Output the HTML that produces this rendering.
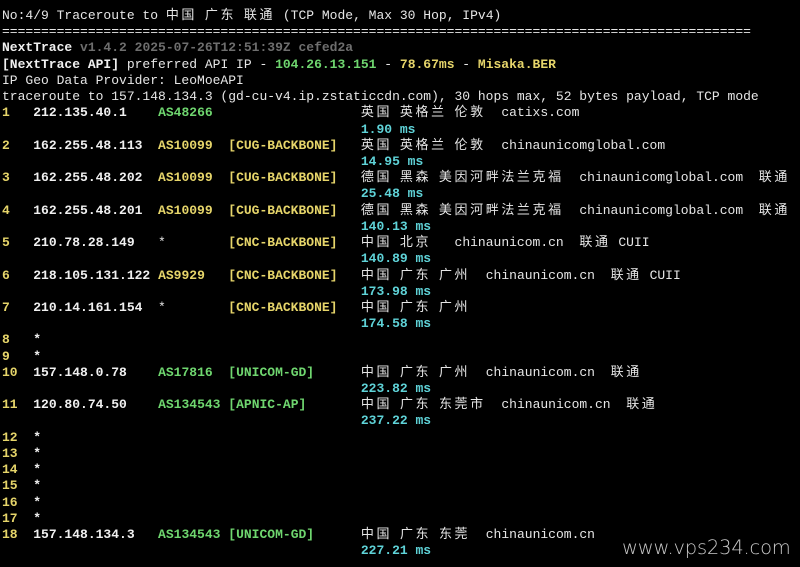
<!DOCTYPE html>
<html><head><meta charset="utf-8"><style>
html,body{margin:0;padding:0;background:#000;width:800px;height:567px;overflow:hidden}
.t{position:absolute;left:2px;top:8px;font-family:"Liberation Mono","Noto Sans CJK SC",monospace;font-size:13px;color:#e6e6e6}
.t div{height:16.22px;line-height:16px;overflow:visible;white-space:pre}
.c{font-family:"Noto Sans CJK SC","WenQuanYi Zen Hei",sans-serif;letter-spacing:2.6px;font-size:13px;line-height:8px}
.g{color:#6fd66f;font-weight:bold}
.y{color:#e6d56a;font-weight:bold}
.gr{color:#6e6e6e;font-weight:bold}
.m{color:#5fd3d8;font-weight:bold}
.w{color:#f0f0f0;font-weight:bold}
.wm{position:absolute;left:622px;top:536px;font-family:"DejaVu Sans","Liberation Sans",sans-serif;font-weight:200;font-size:19.5px;color:#c8c8c8;letter-spacing:-0.2px}
</style></head><body>
<div class="t"><div>No:4/9 Traceroute to <span class="c">中国</span> <span class="c">广东</span> <span class="c">联通</span> (TCP Mode, Max 30 Hop, IPv4)</div><div>================================================================================================</div><div><span class="w">NextTrace</span> <span class="gr">v1.4.2 2025-07-26T12:51:39Z cefed2a</span></div><div><span class="w">[NextTrace API]</span> preferred API IP - <span class="g">104.26.13.151</span> - <span class="y">78.67ms</span> - <span class="y">Misaka.BER</span></div><div>IP Geo Data Provider: LeoMoeAPI</div><div>traceroute to 157.148.134.3 (gd-cu-v4.ip.zstaticcdn.com), 30 hops max, 52 bytes payload, TCP mode</div><div><span class="y">1</span>   <span class="w">212.135.40.1</span>    <span class="g">AS48266</span>                   <span class="c">英国</span> <span class="c">英格兰</span> <span class="c">伦敦</span>  catixs.com</div><div>                                              <span class="m">1.90 ms</span></div><div><span class="y">2</span>   <span class="w">162.255.48.113</span>  <span class="y">AS10099</span>  <span class="y">[CUG-BACKBONE]</span>   <span class="c">英国</span> <span class="c">英格兰</span> <span class="c">伦敦</span>  chinaunicomglobal.com</div><div>                                              <span class="m">14.95 ms</span></div><div><span class="y">3</span>   <span class="w">162.255.48.202</span>  <span class="y">AS10099</span>  <span class="y">[CUG-BACKBONE]</span>   <span class="c">德国</span> <span class="c">黑森</span> <span class="c">美因河畔法兰克福</span>  chinaunicomglobal.com  <span class="c">联通</span></div><div>                                              <span class="m">25.48 ms</span></div><div><span class="y">4</span>   <span class="w">162.255.48.201</span>  <span class="y">AS10099</span>  <span class="y">[CUG-BACKBONE]</span>   <span class="c">德国</span> <span class="c">黑森</span> <span class="c">美因河畔法兰克福</span>  chinaunicomglobal.com  <span class="c">联通</span></div><div>                                              <span class="m">140.13 ms</span></div><div><span class="y">5</span>   <span class="w">210.78.28.149</span>   *        <span class="y">[CNC-BACKBONE]</span>   <span class="c">中国</span> <span class="c">北京</span>   chinaunicom.cn  <span class="c">联通</span> CUII</div><div>                                              <span class="m">140.89 ms</span></div><div><span class="y">6</span>   <span class="w">218.105.131.122</span> <span class="y">AS9929</span>   <span class="y">[CNC-BACKBONE]</span>   <span class="c">中国</span> <span class="c">广东</span> <span class="c">广州</span>  chinaunicom.cn  <span class="c">联通</span> CUII</div><div>                                              <span class="m">173.98 ms</span></div><div><span class="y">7</span>   <span class="w">210.14.161.154</span>  *        <span class="y">[CNC-BACKBONE]</span>   <span class="c">中国</span> <span class="c">广东</span> <span class="c">广州</span></div><div>                                              <span class="m">174.58 ms</span></div><div><span class="y">8</span>   <span class="w">*</span></div><div><span class="y">9</span>   <span class="w">*</span></div><div><span class="y">10</span>  <span class="w">157.148.0.78</span>    <span class="g">AS17816</span>  <span class="g">[UNICOM-GD]</span>      <span class="c">中国</span> <span class="c">广东</span> <span class="c">广州</span>  chinaunicom.cn  <span class="c">联通</span></div><div>                                              <span class="m">223.82 ms</span></div><div><span class="y">11</span>  <span class="w">120.80.74.50</span>    <span class="g">AS134543</span> <span class="g">[APNIC-AP]</span>       <span class="c">中国</span> <span class="c">广东</span> <span class="c">东莞市</span>  chinaunicom.cn  <span class="c">联通</span></div><div>                                              <span class="m">237.22 ms</span></div><div><span class="y">12</span>  <span class="w">*</span></div><div><span class="y">13</span>  <span class="w">*</span></div><div><span class="y">14</span>  <span class="w">*</span></div><div><span class="y">15</span>  <span class="w">*</span></div><div><span class="y">16</span>  <span class="w">*</span></div><div><span class="y">17</span>  <span class="w">*</span></div><div><span class="y">18</span>  <span class="w">157.148.134.3</span>   <span class="g">AS134543</span> <span class="g">[UNICOM-GD]</span>      <span class="c">中国</span> <span class="c">广东</span> <span class="c">东莞</span>  chinaunicom.cn</div><div>                                              <span class="m">227.21 ms</span></div></div>
<div class="wm">www.vps234.com</div>
</body></html>
